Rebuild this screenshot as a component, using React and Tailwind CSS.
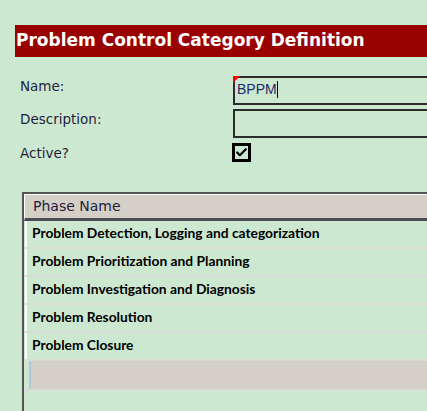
import { Check } from "lucide-react";

const phases = [
  "Problem Detection, Logging and categorization",
  "Problem Prioritization and Planning",
  "Problem Investigation and Diagnosis",
  "Problem Resolution",
  "Problem Closure",
];

export default function App() {
  return (
    <div className="h-[411px] w-[427px] overflow-hidden bg-[#cde8d0]">
      {/* Title bar */}
      <div className="ml-[15px] mt-[25px] flex h-[32px] items-center bg-[#990000] pl-[1px]">
        <h1 className="whitespace-nowrap font-['DejaVu_Sans',sans-serif] text-[17px] font-bold text-white">
          Problem Control Category Definition
        </h1>
      </div>

      {/* Form */}
      <div className="mt-[19px] grid grid-cols-[233px_1fr] gap-y-[4px] font-['DejaVu_Sans',sans-serif] text-[13.5px] text-[#1e1e3c]">
        <label className="flex items-center pl-[20px] pb-[8px]">Name:</label>
        <div className="relative -mr-[4px] flex h-[29px] items-start border-2 border-[#2c2c2c] pl-[2px] pt-[2px]">
          <span className="absolute left-[-2px] top-[-2px] h-0 w-0 border-r-[7px] border-t-[7px] border-r-transparent border-t-[#ff0000]" />
          <span className="font-['Liberation_Sans',sans-serif] text-[14px] leading-[18px] text-[#1f2a6a]">BPPM</span>
          <span className="mt-[1px] h-[17px] w-[1px] bg-black" />
        </div>

        <label className="flex items-center pl-[20px] pb-[10px]">Description:</label>
        <div className="-mr-[4px] h-[29px] border-2 border-[#2c2c2c]" />

        <label className="flex items-center pl-[20px]">Active?</label>
        <div className="-ml-[1px] flex h-[19px] w-[19px] items-center justify-center border-[3px] border-black bg-[#cde8d0]">
          <Check className="h-[13px] w-[13px] text-black" strokeWidth={4} />
        </div>
      </div>

      {/* Phase table */}
      <div className="ml-[22px] mt-[28px] h-[300px] border-l-2 border-t-2 border-[#555555]">
        <div className="flex h-[27px] items-center border-b-[3px] border-t border-l border-b-[#4a4a58] border-t-white border-l-white bg-[#d4d0c8] pl-[8px] font-['DejaVu_Sans',sans-serif] text-[14px] text-[#1e1e3c]">
          Phase Name
        </div>
        {phases.map((p) => (
          <div
            key={p}
            className="flex h-[28px] items-center border-b-[2px] border-[#d8dcd4] pl-[1px]"
          >
            <div className="flex h-full items-center border-l-2 border-white pl-[5px] font-['Lato',sans-serif] text-[13.8px] font-bold text-black">
              {p}
            </div>
          </div>
        ))}
        <div className="ml-[5px] h-[28px] border-l-2 border-[#b8c4d8] bg-[#d4d0c8]" />
        <div className="h-[2px] bg-[#d8dcd4]" />
      </div>
    </div>
  );
}
